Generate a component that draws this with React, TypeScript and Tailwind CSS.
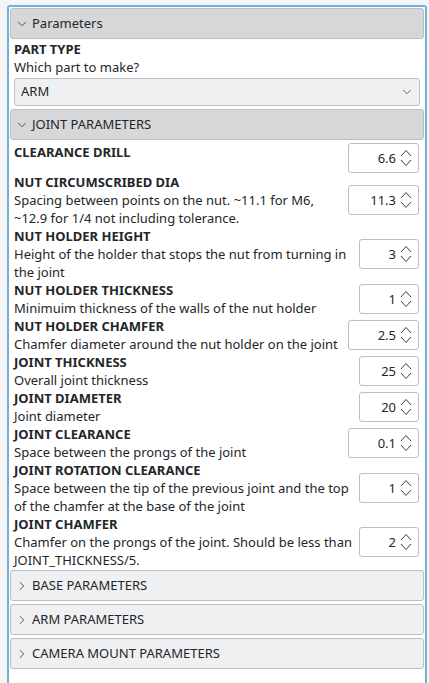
import { ChevronDown, ChevronRight } from "lucide-react";

type Param = {
  label: string;
  desc?: string[];
  value: string;
  wide?: boolean;
};

const jointParams: Param[] = [
  { label: "CLEARANCE DRILL", value: "6.6", wide: true },
  {
    label: "NUT CIRCUMSCRIBED DIA",
    desc: [
      "Spacing between points on the nut. ~11.1 for M6,",
      "~12.9 for 1/4 not including tolerance.",
    ],
    value: "11.3",
    wide: true,
  },
  {
    label: "NUT HOLDER HEIGHT",
    desc: ["Height of the holder that stops the nut from turning in", "the joint"],
    value: "3",
  },
  {
    label: "NUT HOLDER THICKNESS",
    desc: ["Minimuim thickness of the walls of the nut holder"],
    value: "1",
  },
  {
    label: "NUT HOLDER CHAMFER",
    desc: ["Chamfer diameter around the nut holder on the joint"],
    value: "2.5",
    wide: true,
  },
  { label: "JOINT THICKNESS", desc: ["Overall joint thickness"], value: "25" },
  { label: "JOINT DIAMETER", desc: ["Joint diameter"], value: "20" },
  {
    label: "JOINT CLEARANCE",
    desc: ["Space between the prongs of the joint"],
    value: "0.1",
    wide: true,
  },
  {
    label: "JOINT ROTATION CLEARANCE",
    desc: [
      "Space between the tip of the previous joint and the top",
      "of the chamfer at the base of the joint",
    ],
    value: "1",
  },
  {
    label: "JOINT CHAMFER",
    desc: [
      "Chamfer on the prongs of the joint. Should be less than",
      "JOINT_THICKNESS/5.",
    ],
    value: "2",
  },
];

const collapsed = ["BASE PARAMETERS", "ARM PARAMETERS", "CAMERA MOUNT PARAMETERS"];

const SpinArrows = () => (
  <svg width="12" height="22" viewBox="0 0 12 22" className="text-[#3b3d40]">
    <path d="M1 9 L6 3.5 L11 9" fill="none" stroke="currentColor" strokeWidth="1" />
    <path d="M1 13 L6 18.5 L11 13" fill="none" stroke="currentColor" strokeWidth="1" />
  </svg>
);

const SpinBox = ({ value, wide }: { value: string; wide?: boolean }) => (
  <div
    className={
      (wide ? "w-[71px]" : "w-[60px]") +
      " h-[30px] shrink-0 flex items-center justify-end gap-[4px] pr-[6px] border border-[#bdbebf] rounded-[3px] bg-white"
    }
  >
    <span className="text-[13px]">{value}</span>
    <SpinArrows />
  </div>
);

const Header = ({ title, open }: { title: string; open?: boolean }) => (
  <div
    className={
      (open ? "bg-[#d6d7d8]" : "bg-[#eff0f1]") +
      " h-[31px] flex items-center gap-[3px] pl-[4px] border border-[#bdbebf] rounded-[3px]"
    }
  >
    {open ? (
      <ChevronDown size={14} strokeWidth={1.3} className="text-[#232629]" />
    ) : (
      <ChevronRight size={14} strokeWidth={1.3} className="text-[#232629]" />
    )}
    <span className="text-[13px]">{title}</span>
  </div>
);

export default function App() {
  return (
    <div
      className="h-[683px] overflow-hidden bg-[#f6f4f4] pt-[5px] pl-[7px] pr-[2px] text-[#232629]"
      style={{ fontFamily: '"Noto Sans", "Open Sans", sans-serif' }}
    >
      <div className="h-[700px] border-2 border-b-0 border-[#6fb3d9] rounded-t-[3px] bg-white px-[1px] pt-[1px]">
        <Header title="Parameters" open />

        {/* Part type */}
        <div className="px-[4px] pt-[1px] leading-[18px] text-[13px]">
          <div className="font-bold">PART TYPE</div>
          <div>Which part to make?</div>
        </div>
        <div className="mx-[4px] mt-[2px] mb-[3px] h-[28px] flex items-center justify-between pl-[6px] pr-[5px] bg-[#eff0f1] border border-[#bdbebf] rounded-[3px] text-[13px]">
          <span>ARM</span>
          <ChevronDown size={14} strokeWidth={1.3} className="text-[#3b3d40]" />
        </div>

        <Header title="JOINT PARAMETERS" open />

        {/* Joint rows */}
        <div className="pt-[3px] pb-[1px] pl-[4px] pr-[5px] text-[13px] leading-[18px]">
          {jointParams.map((p) => (
            <div key={p.label} className="flex items-center justify-between gap-[2px]">
              <div className={"self-start whitespace-nowrap" + (p.desc ? "" : " h-[30px]")}>
                <div className="font-bold">{p.label}</div>
                {p.desc?.map((d) => (
                  <div key={d}>{d}</div>
                ))}
              </div>
              <SpinBox value={p.value} wide={p.wide} />
            </div>
          ))}
        </div>

        <div className="flex flex-col gap-[3px]">
          {collapsed.map((c) => (
            <Header key={c} title={c} />
          ))}
        </div>
      </div>
    </div>
  );
}
